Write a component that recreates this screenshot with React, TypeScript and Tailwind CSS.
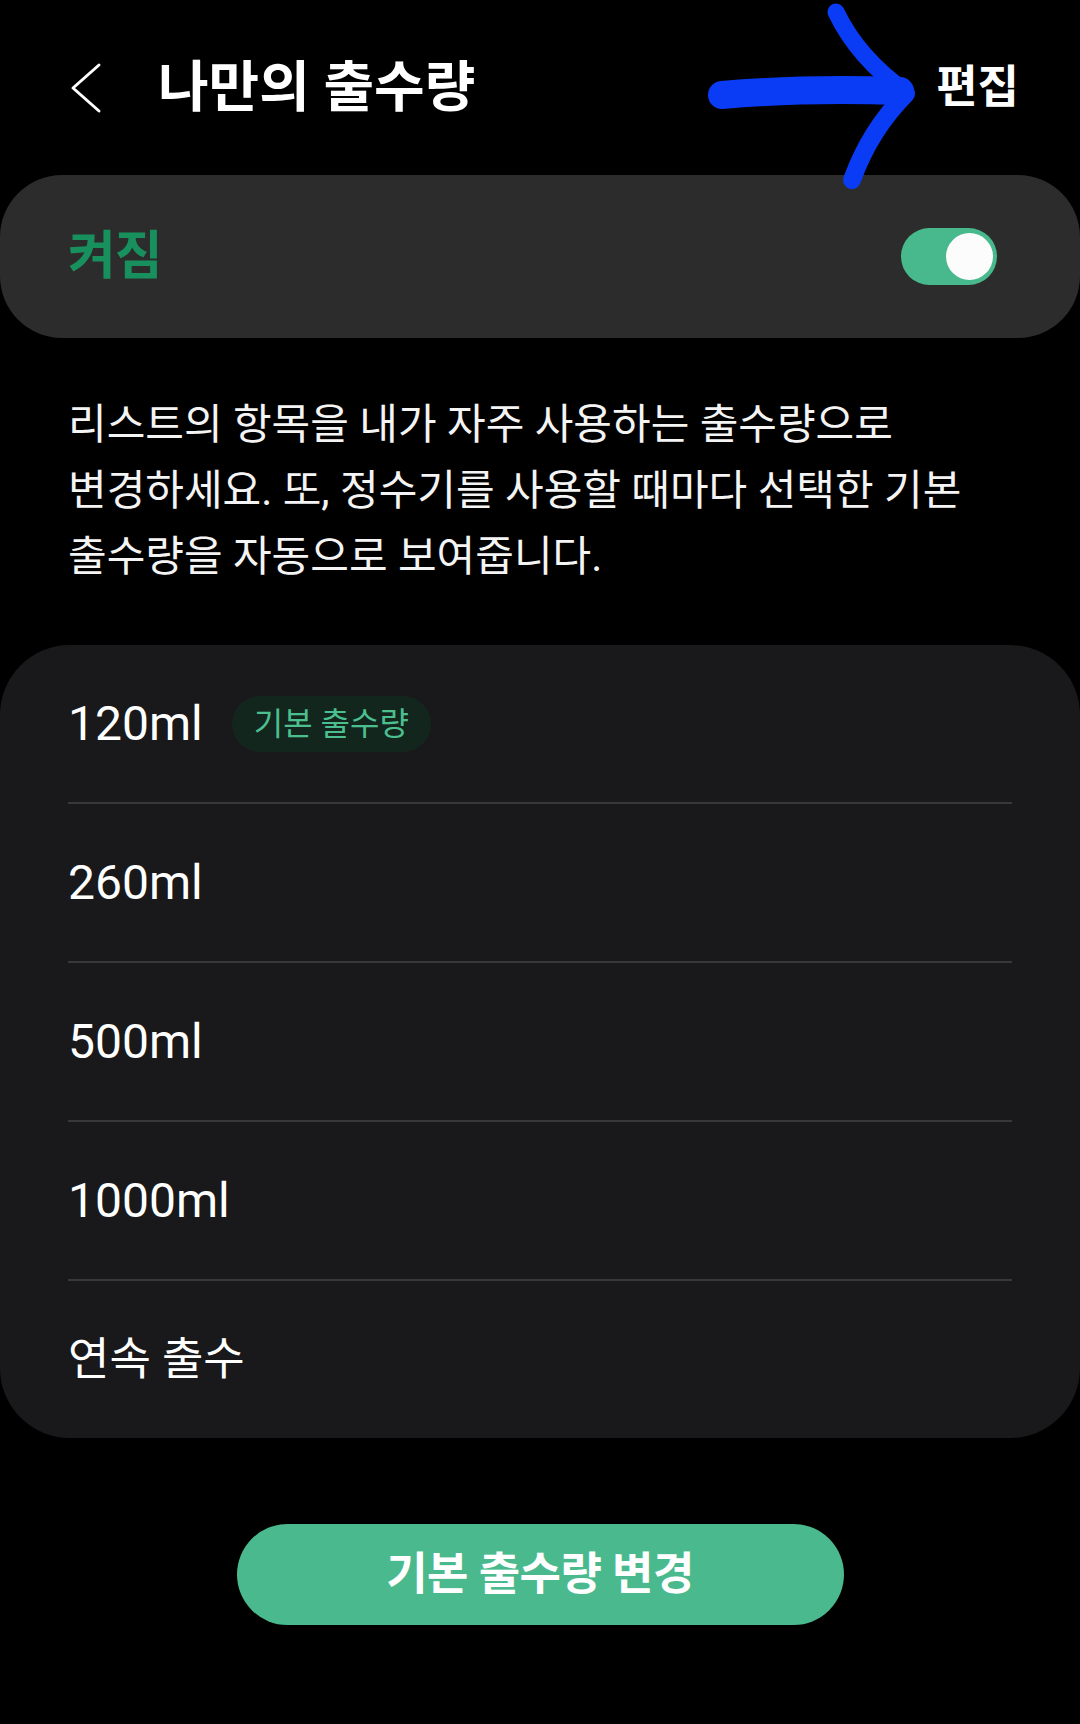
import React from 'react';

const sans = "font-['Roboto','Noto_Sans_CJK_KR',sans-serif]";

const amounts = ['120ml', '260ml', '500ml', '1000ml', '연속 출수'];

const BackChevron = () => (
    <svg width="34" height="54" viewBox="0 0 34 54" fill="none">
        <polyline points="31,4 5,27 31,50" stroke="#ffffff" strokeWidth="3" strokeLinecap="round" strokeLinejoin="round" />
    </svg>
);

// hand-drawn blue arrow pointing at 편집
const BlueArrow = () => (
    <svg className="absolute left-0 top-0 pointer-events-none" width="1080" height="200" viewBox="0 0 1080 200">
        <g stroke="#0b3cf5" strokeLinecap="round" fill="none">
            <path d="M722 95 Q800 88 900 91" strokeWidth="28" />
            <path d="M836 12 Q858 58 906 92" strokeWidth="17" />
            <path d="M906 94 Q870 130 852 180" strokeWidth="18" />
        </g>
    </svg>
);

const Toggle = () => (
    <div className="w-[96px] h-[57px] rounded-full bg-[#48b98c] flex items-center justify-end pr-[4px]">
        <div className="w-[47px] h-[47px] rounded-full bg-[#fcfcfd]" />
    </div>
);

export default function App() {
    return (
        <div className={`relative w-[1080px] min-h-[1724px] bg-black text-white ${sans}`}>
            <BlueArrow />
            <header className="relative h-[175px] flex items-center pl-[68px] pr-[61px]">
                <BackChevron />
                <h1 className="ml-[56px] text-[55px] font-bold text-white">나만의 출수량</h1>
                <button className="ml-auto text-[45px] font-bold text-white">편집</button>
            </header>

            <div className="h-[163px] rounded-[62px] bg-[#2c2c2c] flex items-center justify-between pl-[68px] pr-[83px]">
                <span className="text-[52px] font-bold text-[#17905d] tracking-[-1px]">켜짐</span>
                <Toggle />
            </div>

            <p className="mt-[54px] px-[68px] text-[42px] leading-[66px] text-[#f4f4f4]">
                리스트의 항목을 내가 자주 사용하는 출수량으로<br />
                변경하세요. 또, 정수기를 사용할 때마다 선택한 기본<br />
                출수량을 자동으로 보여줍니다.
            </p>

            <div className="mt-[55px] rounded-[70px] bg-[#19191b] px-[68px]">
                {amounts.map((amount, i) => (
                    <div key={amount} className={i > 0 ? 'border-t-2 border-[#38383a]' : ''}>
                        <div className="h-[157px] flex items-center">
                            <span className={i === 4 ? 'text-[45px] text-white' : 'text-[48px] text-white'}>{amount}</span>
                            {i === 0 && (
                                <span className="ml-[29px] h-[56px] px-[22px] rounded-full bg-[#13261e] text-[#4cbf8e] text-[32px] flex items-center">
                                    기본 출수량
                                </span>
                            )}
                        </div>
                    </div>
                ))}
            </div>

            <div className="mt-[86px] flex justify-center">
                <button className="w-[607px] h-[101px] rounded-full bg-[#4aba8e] text-white text-[45px] font-bold tracking-[-0.5px]">
                    기본 출수량 변경
                </button>
            </div>
        </div>
    );
}
